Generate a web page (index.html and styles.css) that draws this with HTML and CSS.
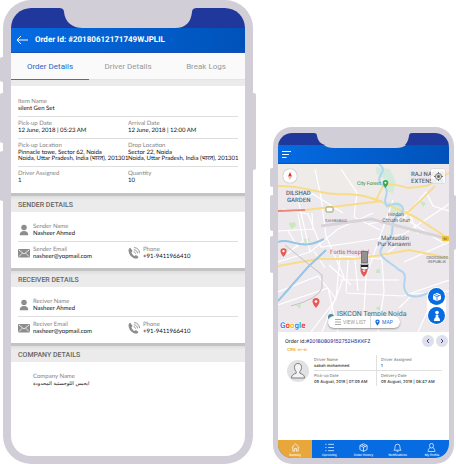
FILE: index.html
```html
<!DOCTYPE html>
<html lang="en">
<head>
<meta charset="utf-8">
<title>Order tracking</title>
<link rel="stylesheet" href="styles.css">
</head>
<body>
<svg width="0" height="0" class="defs" aria-hidden="true">
  <symbol id="person" viewBox="0 0 12 14"><circle cx="6" cy="4" r="3.2"/><path d="M1 13c0-3 2-4.700 5-4.700s5 1.700 5 4.700z"/></symbol>
  <symbol id="mail" viewBox="0 0 12 10"><rect x="0" y="1" width="12" height="8.500" rx="1"/><path d="M1 2l5 4 5-4M1 8.500l3.300-3.300M11 8.500L7.700 5.200" fill="none" stroke="#fff" stroke-width=".8"/></symbol>
  <symbol id="phone" viewBox="0 0 12 12"><path d="M2.300.8C.9 1.500.3 2.600.6 4.300c.6 3.500 3.200 6.500 6.600 7.300 1.500.3 2.700-.2 3.300-1.500L8 7.900l-1.500 1C5 8.200 4 7 3.400 5.400l1.200-1.300z"/><path d="M5.800 2.800c2.200.1 3.600 1.400 3.700 3.600M6 .6c3.300 0 5.400 2.200 5.500 5.500M5.700 4.800c1.100.1 1.700.7 1.800 1.800" fill="none" stroke="#8d8d8d" stroke-width=".9"/></symbol>
  <symbol id="pin" viewBox="0 0 8 10"><path d="M4 0a3.500 3.500 0 0 1 3.500 3.500C7.500 6 4 10 4 10S.5 6 .5 3.500A3.500 3.500 0 0 1 4 0z"/><circle cx="4" cy="3.500" r="1.300" fill="#fff"/></symbol>
</svg>
<main class="stage">
  <section class="phone phone-large">
    <i class="key key-l1"></i><i class="key key-l2"></i><i class="key key-l3"></i><i class="key key-r"></i>
    <div class="screen">
      <svg class="status" viewBox="0 0 234 20" preserveAspectRatio="none" aria-hidden="true"><rect width="234" height="20" fill="#20389b"/><path d="M48 0Q53 0 53 4C54 14 61 20 72 20H164C175 20 180 14 181 4Q181 0 186 0z" fill="#d2ced7"/></svg>
      <header class="appbar">
        <button class="bare" aria-label="Back"><svg width="12" height="10" viewBox="0 0 12 10" fill="none" stroke="#fff"><path d="M12 5H1M5 1L1 5l4 4"/></svg></button>
        <h1>Order Id: #20180612171749WJPLIL</h1>
      </header>
      <nav class="tabs"><button class="active">Order Details</button><button>Driver Details</button><button>Break Logs</button></nav>
      <div class="card facts">
        <div class="row"><div><span>Item Name</span><b>silent Gen Set</b></div></div>
        <div class="row"><div><span>Pick-up Date</span><b>12 June, 2018 | 05:23 AM</b></div><div><span>Arrival Date</span><b>12 June, 2018 | 12:00 AM</b></div></div>
        <div class="row"><div><span>Pick-up Location</span><b>Pinnacle towe, Sector 62, Noida<br>Noida, Uttar Pradesh, India (भारत), 201301</b></div><div><span>Drop Location</span><b>Sector 22, Noida<br>Noida, Uttar Pradesh, India (भारत), 201301</b></div></div>
        <div class="row"><div><span>Driver Assigned</span><b>1</b></div><div><span>Quantity</span><b>10</b></div></div>
      </div>
      <h2>SENDER DETAILS</h2>
      <div class="card people">
        <div class="row"><div class="with-icon"><svg><use href="#person"/></svg><p><span>Sender Name</span><b>Nasheer Ahmed</b></p></div></div>
        <div class="row"><div class="with-icon"><svg><use href="#mail"/></svg><p><span>Sender Email</span><b>nasheer@yopmail.com</b></p></div><div class="with-icon"><svg><use href="#phone"/></svg><p><span>Phone</span><b>+91-9411966410</b></p></div></div>
      </div>
      <h2>RECEIVER DETAILS</h2>
      <div class="card people">
        <div class="row"><div class="with-icon"><svg><use href="#person"/></svg><p><span>Reciver Name</span><b>Nasheer Ahmed</b></p></div></div>
        <div class="row"><div class="with-icon"><svg><use href="#mail"/></svg><p><span>Reciver Email</span><b>nasheer@yopmail.com</b></p></div><div class="with-icon"><svg><use href="#phone"/></svg><p><span>Phone</span><b>+91-9411966410</b></p></div></div>
      </div>
      <h2>COMPANY DETAILS</h2>
      <div class="people company"><div class="row"><div class="with-icon"><i></i><p><span>Company Name</span><b lang="ar">ايجيس اللوجستية المحدودة</b></p></div></div></div>
    </div>
  </section>

  <section class="phone phone-small">
    <i class="key key-l1"></i><i class="key key-l2"></i><i class="key key-l3"></i><i class="key key-r"></i>
    <div class="screen">
      <svg class="status" viewBox="0 0 171 12" preserveAspectRatio="none" aria-hidden="true"><rect width="171" height="12" fill="#20389b"/><path d="M36 0Q39 0 39 3Q40 10 47 12H127Q130 9 131 3Q131 0 134 0z" fill="#d2ced7"/></svg>
      <header class="appbar">
        <svg class="notch-lip" viewBox="0 0 171 3" preserveAspectRatio="none" aria-hidden="true"><path d="M46 0Q49 3 56 3H118Q125 3 128 0z" fill="#d2ced7"/></svg>
        <button class="bare" aria-label="Menu"><svg width="9" height="7" viewBox="0 0 9 7" stroke="#fff"><path d="M0 .5h9M0 3.500h7M0 6.500h4.500"/></svg></button>
      </header>
      <div class="map">
        <svg class="map-art" viewBox="0 0 171 168" preserveAspectRatio="xMidYMid slice">
          <rect width="171" height="168" fill="#ece8ec"/>
          <path d="M0 0H130V14L107 34 80 31 0 22z" fill="#eeebe9"/>
          <g fill="#c7e9bf"><path d="M98 3l14 2 6 13-3 12-8-4 2-9-11-8z" fill="#d3ebdc"/><path d="M109 38h12l4 10-9 2-9-8z" fill="#d3ebdc"/><path d="M11 59l6-1 1 4-5 3zM26 75l5-1 1 4-5 1zM6 84l4 1-2 4zM98 106l4-1v4h-4zM18 141l5-1-1 5zM97 144l5-2v5zM142 37l6 2-3 4z"/></g>
          <g fill="none" stroke="#fff" stroke-width="1.200">
            <path d="M37 5L43 33 48 72 66 113 44 168M4 45L30 50 43 83 79 78 126 70 171 40M0 67L35 65 34 49M18 27L32 88M0 98L32 88 60 65 95 49M63 5L79 29 76 53 102 66M58 135L62 92 102 95 118 82M62 116H121M68 129L125 132 171 116M85 165L88 112 115 36M51 101L73 121M0 128L40 112 58 135 33 168M0 141L50 124 60 168M121 144L135 130 171 127M125 55L148 28 155 42 171 47M90 60L126 54 165 79M18 37L35 30 65 49M20 50L25 77 9 90M104 95L106 128 100 168M140 168L150 146 165 140M126 98L171 78M140 70L130 46M70 96L68 128M77 96L80 127M10 67L20 83M36 87L47 104"/>
          </g>
          <path d="M0 22C22 21 39 29 58 30C76 30 88 31 102 37C118 46 130 48 142 56L171 75" fill="none" stroke="#f8dc86" stroke-width="2"/>
          <path d="M97 38L105 22Q111 18 130 24L149 22 171 9M128 50L143 36 157 22M0 102L40 95H76L103 91 131 86 171 94M27 46L62 42 104 37" fill="none" stroke="#f9dc87" stroke-width="1.800"/>
          <path d="M0 47L27 46" stroke="#e98978" stroke-width="1.800"/>
          <path d="M101 0C112 8 96 11 103 20C116 28 102 35 109 42C126 35 130 48 118 53C110 62 120 68 107 80C94 92 112 97 121 106C134 111 120 121 130 131C144 136 147 127 160 127" fill="none" stroke="#afd5ef" stroke-width="2"/>
          <path d="M0 78C13 73 22 88 46 75M0 137L30 103 48 86" fill="none" stroke="#98c4e5" stroke-width="2"/>
          <path d="M43 62L93 55 171 75" fill="none" stroke="#d7d3d7" stroke-width="3"/>
          <path d="M7 81L44 111V124Q40 135 13 142" fill="none" stroke="#c4c0c4" stroke-width="1"/>
          <rect x="48" y="43" width="7" height="5" rx="1" fill="#fff" stroke="#8fa36f"/><rect x="164" y="72" width="7" height="5" rx="1" fill="#f2bd2c"/>
          <text x="167" y="76" class="m-mid" font-size="3">58</text>
          <g class="m-area"><text x="8" y="31">DILSHAD</text><text x="9" y="38">GARDEN</text></g>
          <g class="m-area"><text x="133" y="12">RAJ NAGAR</text><text x="133" y="19">EXTENSION</text></g>
          <text x="79" y="21" class="m-green">City Forest</text>
          <use href="#pin" x="104" y="16" width="7" height="8" fill="#34a853"/>
          <text x="47" y="58" class="m-tiny">SAHIBABAD</text>
          <g class="m-mid m-place"><text x="118" y="52">Hindon</text><text x="118" y="58">Chhath Ghat</text></g>
          <g class="m-mid m-town"><text x="117" y="76">Mahiuddin</text><text x="116" y="82">Pur Kanawni</text></g>
          <g class="m-mid m-tiny"><text x="159" y="95">CROSSINGS</text><text x="159" y="99">REPUBLIK</text></g>
          <text x="52" y="90" class="m-red">Fortis Hospital</text>
          <g fill="#e95858"><use href="#pin" x="2" y="84" width="7" height="9"/><use href="#pin" x="34" y="134" width="8" height="10"/><use href="#pin" x="82" y="103" width="8" height="10"/></g>
          <circle cx="53" cy="153" r="3" fill="#4a8ba2"/>
          <text x="59" y="152" class="m-teal">ISKCON Temple Noida</text>
          <text x="2" y="164" class="m-logo"><tspan fill="#4285f4">G</tspan><tspan fill="#ea4335">o</tspan><tspan fill="#fbbc05">o</tspan><tspan fill="#4285f4">g</tspan><tspan fill="#34a853">l</tspan><tspan fill="#ea4335">e</tspan></text>
          <path d="M83 87h7v12h-7z" fill="#777"/><path d="M84 88h5v10h-5z" fill="#929292"/><path d="M83 100h7v5q-3.500 2-7 0z" fill="#f6f6f6" stroke="#444" stroke-width=".6"/><path d="M83 101h7v2h-7z" fill="#222"/>
        </svg>
        <button class="compass" aria-label="Reset north"><svg width="6" height="8" viewBox="0 0 6 8"><path d="M3 0l2 4.500H1z" fill="#e52d27"/><path d="M3 8L1 4.500h4z" fill="#f3b3ae"/></svg></button>
        <button class="locate" aria-label="My location"><svg width="9" height="9" viewBox="0 0 9 9" fill="none" stroke="#777"><circle cx="4.500" cy="4.500" r="3"/><circle cx="4.500" cy="4.500" r="1.200" fill="#555"/><path d="M4.500 0v2M4.500 7v2M0 4.500h2M7 4.500h2"/></svg></button>
        <div class="fabs">
          <button aria-label="Parcels"><svg width="10" height="10" viewBox="0 0 10 10"><path d="M5 .8l4 2v4.500L5 9.300 1 7.300V2.800z" fill="#fff"/><path d="M1 2.800l4 2 4-2M5 4.800v4.500M3 1.800l4 2" fill="none" stroke="#076be1" stroke-width=".7"/></svg></button>
          <button aria-label="Drivers"><svg width="10" height="12" viewBox="0 0 10 12" fill="#fff"><circle cx="5" cy="2.500" r="1.800"/><path d="M3.700 4.800h2.600v2.400H3.700zM2 11q0-4 3-4t3 4z"/></svg></button>
        </div>
        <div class="switch"><button><svg width="6" height="6" viewBox="0 0 6 6" stroke="#aaa"><path d="M0 .5h6M0 3h6M0 5.500h6"/></svg>VIEW LIST</button><button class="on"><svg width="5" height="7" fill="#176ad8"><use href="#pin"/></svg>MAP</button></div>
      </div>
      <article class="trip">
        <header><div><h3>Order Id:<em>#20180809152752H5KKFZ</em></h3><strong>CRN: er-er</strong></div>
          <div class="pager"><button aria-label="Previous"><svg viewBox="0 0 4 6"><path d="M3 1L1 3l2 2"/></svg></button><button aria-label="Next"><svg viewBox="0 0 4 6"><path d="M1 1l2 2-2 2"/></svg></button></div></header>
        <div class="trip-body">
          <svg class="avatar" viewBox="0 0 22 22"><circle cx="11" cy="11" r="11" fill="#e2e2e4"/><path d="M11 3.500c2.500 0 3.700 1.700 3.500 4-.1 2-.8 3.300-1.700 4.200v1.500c2.500 1 4.500 1.400 4.800 4.800H4.400c.3-3.400 2.300-3.800 4.800-4.800v-1.500C8.300 10.800 7.600 9.500 7.500 7.500c-.2-2.300 1-4 3.500-4z" fill="#f4f4f5" stroke="#666" stroke-width=".8"/></svg>
          <div class="grid"><p><span>Driver Name</span><b>sabah mohammed</b></p><p><span>Driver Assigned</span><b>1</b></p><p><span>Pick-up Date</span><b>09 August, 2018 | 07:09 AM</b></p><p><span>Delivery Date</span><b>09 August, 2018 | 06:47 AM</b></p></div>
        </div>
      </article>
      <nav class="bottom">
        <a href="#running" class="current"><svg viewBox="0 0 10 10"><path d="M.8 5L5 1l4.200 4M2 4.500V9h2V6h2v3h2V4.500"/></svg>Running</a>
        <a href="#upcoming"><svg viewBox="0 0 10 10"><path d="M3.500 1.500H10M3.500 5H10M3.500 8.500H10M.3 1.500h1.400M.3 5h1.400M.3 8.500h1.400"/></svg>Upcoming</a>
        <a href="#history"><svg viewBox="0 0 10 10"><path d="M5 .8l4 2v4.500L5 9.300 1 7.300V2.800zM1 2.800l4 2 4-2M5 4.800v4.500M3 1.800l4 2"/></svg>Order History</a>
        <a href="#notifications"><svg viewBox="0 0 10 10"><path d="M1 8c1-1 1.300-2 1.300-4a2.700 2.700 0 0 1 5.400 0c0 2 .3 3 1.300 4zM4 9.300h2"/></svg>Notifications</a>
        <a href="#profile"><svg viewBox="0 0 10 10"><ellipse cx="5" cy="3" rx="2.200" ry="2.600"/><path d="M3.500 5.200C1.500 6 1.300 8 1.300 9.500h7.400C8.700 8 8.500 6 6.500 5.200"/></svg>My Profile</a>
      </nav>
    </div>
  </section>
</main>
</body>
</html>
```
FILE: styles.css
```css
* { box-sizing: border-box; }
body { margin: 0; background: #fff; font-family: Inter, "Noto Sans", "DejaVu Sans", sans-serif; color: #333; text-rendering: geometricPrecision; }
h1, h2, h3, p { margin: 0; }
button { padding: 0; border: 0; background: none; font: inherit; color: inherit; }
svg { display: block; flex: none; }
.defs { position: absolute; }
.stage { display: grid; grid-template-columns: minmax(0, 250fr) minmax(0, 181fr); align-items: end; gap: 20px; min-height: 100vh; padding: 0 2px 0 3px; }
.phone { position: relative; display: flex; background: #d2ced7; }
.phone-large { align-self: stretch; padding: 8px; border-radius: 28px; }
.phone-small { padding: 6px 5px; border-radius: 19px; }
.screen { flex: 1; min-width: 0; display: flex; flex-direction: column; overflow: hidden; background: #fff; }
.phone-large .screen { border-radius: 20px; }
.phone-small .screen { border-radius: 14px; }

.key { position: absolute; width: 4px; left: -3px; border-radius: 2px; background: #d2ced7; }
.key-l1 { top: 57px; height: 25px; }
.key-l2 { top: 93px; height: 50px; }
.key-l3 { top: 151px; height: 50px; }
.key-r { top: 93px; height: 77px; left: auto; right: -3px; }
.phone-small .key-l1 { top: 41px; height: 19px; }
.phone-small .key-l2 { top: 68px; height: 36px; }
.phone-small .key-l3 { top: 109px; height: 37px; }
.phone-small .key-r { top: 68px; height: 55px; right: -2px; }

.status { width: 100%; height: 20px; }
.appbar { position: relative; display: flex; align-items: center; gap: 7px; height: 25px; padding: 0 5px; background: linear-gradient(100deg, #056be3, #0052b8); border-bottom: 1px solid #1b4fb4; }
.appbar h1 { color: #fff; font: 700 8px/10px Roboto, sans-serif; white-space: nowrap; }
.phone-small .status { height: 12px; }
.phone-small .appbar { height: 19px; padding: 0 4px; }
.notch-lip { position: absolute; top: 0; left: 0; width: 100%; height: 3px; }

.tabs { display: grid; grid-template-columns: repeat(3, 1fr); height: 27px; background: #fafafa; font: 8px/10px Roboto, sans-serif; color: #999; }
.tabs button { padding-top: 2px; border-bottom: 1px solid #e4e4e4; }
.tabs .active { color: #2866c8; border-bottom: 1px solid #4668d8; }
.facts { border-top: 6px solid #ebebeb; padding: 9px 7px 5px; }
.card { border-bottom: 3px solid #c3c3c3; }
.row { display: grid; grid-template-columns: repeat(2, minmax(0, 1fr)); padding: 3px 0 4px; border-bottom: 1px solid #dedede; font-family: Lato, "Noto Sans", sans-serif; font-size: 6px; }
.row:last-child { border-bottom: 0; }
.row b { white-space: nowrap; }
.row span, .row b { display: block; }
.row span { line-height: 8px; color: #858585; }
.row b { line-height: 6px; font-weight: 400; color: #111; }
h2 { height: 16px; padding: 0 7px; background: linear-gradient(#dedede, #ebebeb 4px); font: 500 7px/18px Roboto, sans-serif; color: #666; }
.people { padding: 8px 7px 4px; }
.people .row + .row { padding-top: 4px; }
.with-icon { display: grid; grid-template-columns: 12px 1fr; column-gap: 3px; align-items: center; }
.with-icon svg { width: 12px; height: 12px; fill: #8d8d8d; }
.company b { font-family: "DejaVu Sans", sans-serif; font-size: 5px; }

.map { position: relative; aspect-ratio: 171 / 168; overflow: hidden; }
.map-art { width: 100%; height: 100%; font-family: Roboto, sans-serif; }
.m-area { font-size: 6px; font-weight: 500; fill: #52677a; }
.m-mid { text-anchor: middle; fill: #555; }
.m-place { font-size: 5px; }
.m-town { font-size: 6px; }
.m-tiny { font-size: 4px; fill: #5a6674; }
.m-green { font-size: 5px; fill: #258a3e; }
.m-red { font-size: 6px; fill: #c2565c; }
.m-teal { font-size: 7px; fill: #3d6e7c; }
.m-logo { font-size: 8px; font-weight: 700; stroke: #fff; stroke-width: 1px; paint-order: stroke; }
.compass, .locate, .fabs, .switch { position: absolute; display: flex; }
.compass, .locate { align-items: center; justify-content: center; width: 14px; height: 14px; background: #fff; box-shadow: 0 0 1px #777; }
.compass { top: 5px; left: 5px; border-radius: 50%; }
.locate { top: 5px; right: 4px; background: rgba(255,255,255,.8); border-radius: 1px; }
.fabs { right: 3px; bottom: 7px; flex-direction: column; gap: 2px; padding: 1px; background: #fff; border-radius: 10px; }
.fabs button { display: grid; place-items: center; width: 17px; height: 17px; border-radius: 50%; background: #076be1; }
.switch { left: 50px; bottom: 4px; height: 12px; border-radius: 6px; background: #fff; box-shadow: 0 1px 2px #999; font: 5px/6px Roboto, sans-serif; color: #999; }
.switch button { display: flex; align-items: center; gap: 2px; padding: 0 4px 0 7px; }
.switch .on { padding: 0 7px 0 4px; border-left: 1px solid #ddd; color: #176ad8; }

.trip { flex: 1; padding: 3px 0 53px 7px; }
.trip header { display: flex; justify-content: space-between; }
.trip h3 { margin-top: 4px; font-size: 5px; line-height: 7px; font-weight: 500; white-space: nowrap; }
.trip em { font-style: normal; color: #3438a0; }
.trip strong { display: block; padding-left: 2px; font-size: 4px; line-height: 8px; font-weight: 500; color: #eda12b; }
.pager { display: flex; gap: 2px; padding-right: 1px; }
.pager button { display: grid; place-items: center; width: 12px; height: 12px; border-radius: 50%; background: #dfdfea; }
.pager svg { width: 4px; height: 6px; fill: none; stroke: #3540a5; }
.trip-body { display: flex; align-items: center; gap: 5px; padding: 1px 7px 1px 2px; }
.avatar { width: 22px; height: 22px; }
.grid { flex: 1; display: grid; grid-template-columns: 62px 1fr; font-size: 4px; }
.grid p { padding: 2px 0 2px 4px; border-left: 1px solid #e0e0e0; white-space: nowrap; }
.grid p:nth-child(odd) { padding-left: 0; border-left: 0; }
.grid p:nth-child(-n+2) { border-bottom: 1px solid #e0e0e0; }
.grid span, .grid b { display: block; font-weight: 500; }
.grid span { line-height: 6px; color: #888; }
.grid b { line-height: 5px; }
.bottom { display: grid; grid-template-columns: repeat(5, 1fr); height: 18px; background: #076be1; }
.bottom a { display: flex; flex-direction: column; align-items: center; gap: 1px; padding-top: 3px; color: #fff; font-size: 3px; line-height: 4px; font-weight: 500; text-decoration: none; white-space: nowrap; }
.bottom svg { width: 9px; height: 9px; fill: none; stroke: #fff; stroke-width: .8; }
.bottom .current { background: #e9a63a; }
```
